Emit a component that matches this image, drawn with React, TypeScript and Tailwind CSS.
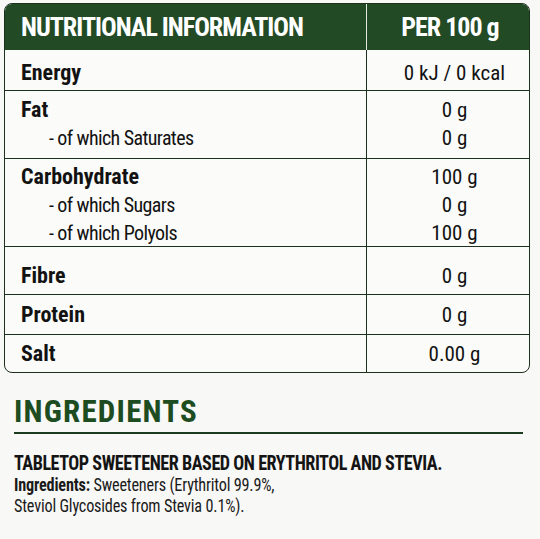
import React from "react";

const F = { fontFamily: '"Roboto Condensed", "Liberation Sans Narrow", "DejaVu Sans Condensed", sans-serif' };

type Line = [string, boolean];

function Row({ h, pt, labels, values, first }: { h: string; pt: string; labels: Line[]; values: string[]; first?: boolean }) {
  return (
    <div className={`flex ${h} ${first ? "" : "border-t-[1.5px] border-[#1c301e]"}`}>
      <div className={`w-[361px] ${pt} pl-[16px]`}>
        {labels.map(([t, b], i) => (
          <div
            key={i}
            className={b ? "text-[22px] font-bold leading-[28px]" : "text-[20px] leading-[28px] pl-[28px] tracking-[-0.6px]"}
          >
            {t}
          </div>
        ))}
      </div>
      <div className={`flex-1 border-l-[1.5px] border-[#1c301e] ${pt} pl-[13px] text-center`}>
        {values.map((v, i) => (
          <div key={i} className="text-[21px] leading-[28px]">
            {v}
          </div>
        ))}
      </div>
    </div>
  );
}

export default function App() {
  return (
    <div className="w-[540px] h-[539px] bg-[#f8f8f6] pt-[3px] pl-[4px] text-[#121212]" style={F}>
      <div className="w-[526px] border-[1.5px] border-[#1c301e] rounded-[8px] overflow-hidden bg-[#fbfbf9]">
        <div className="flex h-[45.5px] bg-[#224a25] text-white font-bold">
          <div className="w-[361px] pl-[16px] flex items-center text-[26px] leading-none tracking-[-1px]">
            NUTRITIONAL INFORMATION
          </div>
          <div className="flex-1 border-l-[1.5px] border-[#e4e8e4] flex items-center justify-center pl-[4px] text-[26px] leading-none tracking-[-1px]">
            PER 100 g
          </div>
        </div>
        <Row h="h-[40px]" pt="pt-[9.5px]" labels={[["Energy", true]]} values={["0 kJ / 0 kcal"]} first />
        <Row
          h="h-[68.3px]"
          pt="pt-[5px]"
          labels={[["Fat", true], ["- of which Saturates", false]]}
          values={["0 g", "0 g"]}
        />
        <Row
          h="h-[88.4px]"
          pt="pt-[4.7px]"
          labels={[["Carbohydrate", true], ["- of which Sugars", false], ["- of which Polyols", false]]}
          values={["100 g", "0 g", "100 g"]}
        />
        <Row h="h-[48.3px]" pt="pt-[15px]" labels={[["Fibre", true]]} values={["0 g"]} />
        <Row h="h-[40px]" pt="pt-[6px]" labels={[["Protein", true]]} values={["0 g"]} />
        <Row h="h-[37.5px]" pt="pt-[4.7px]" labels={[["Salt", true]]} values={["0.00 g"]} />
      </div>
      <div className="ml-[10px] w-[509px] mt-[23.5px]">
        <div className="text-[31px] font-bold leading-none tracking-[1.2px] text-[#1d4c21] pb-[5px] border-b-2 border-[#1b3a1e]">
          INGREDIENTS
        </div>
        <div className="mt-[18.3px] h-[20px]">
          <div className="inline-block origin-left scale-x-[0.93] text-[19.5px] font-bold leading-[20px] tracking-[-0.5px] text-[#141414] whitespace-nowrap">
            TABLETOP SWEETENER BASED ON ERYTHRITOL AND STEVIA.
          </div>
        </div>
        <div className="mt-[1.5px] inline-block origin-top-left scale-x-[0.9] text-[18px] leading-[21px] tracking-[-0.2px] text-[#1a1a1a] whitespace-nowrap">
          <span className="font-bold">Ingredients:</span> Sweeteners (Erythritol 99.9%,
          <br />
          Steviol Glycosides from Stevia 0.1%).
        </div>
      </div>
    </div>
  );
}
